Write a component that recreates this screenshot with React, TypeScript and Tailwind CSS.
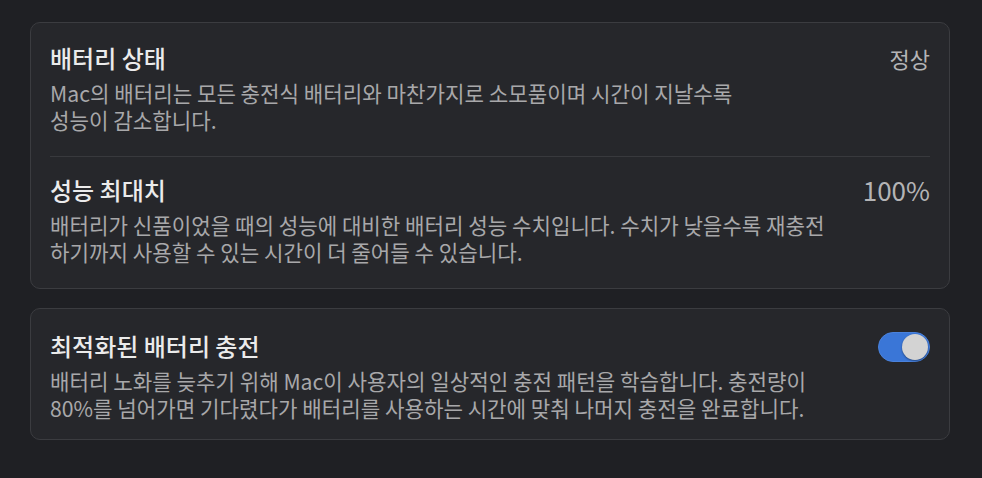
import React from "react";

const font = { fontFamily: '"Noto Sans CJK KR", "Noto Sans", sans-serif' };

function Row({ title, desc, right }: { title: string; desc: React.ReactNode; right?: React.ReactNode }) {
  return (
    <div className="flex items-start justify-between">
      <div className="flex flex-col">
        <div className="text-[24px] leading-[30px] font-medium text-[#ebebeb]">{title}</div>
        <div className="mt-[6px] text-[21.2px] leading-[27px] text-[#a8a8aa]">{desc}</div>
      </div>
      {right}
    </div>
  );
}

export default function App() {
  return (
    <div className="w-[982px] h-[478px] bg-[#1f2024] overflow-hidden pt-[22px] pl-[30px]" style={font}>
      <div className="w-[920px] rounded-[10px] border border-[#3b3c40] bg-[#26272b] px-[19px] pt-[20px] pb-[23px]">
        <Row
          title="배터리 상태"
          desc={<>Mac의 배터리는 모든 충전식 배터리와 마찬가지로 소모품이며 시간이 지날수록<br />성능이 감소합니다.</>}
          right={<div className="text-[22px] leading-[30px] text-[#b4b4b6]">정상</div>}
        />
        <div className="h-px bg-[#38393d] mt-[23px] mb-[18px]" />
        <Row
          title="성능 최대치"
          desc={<>배터리가 신품이었을 때의 성능에 대비한 배터리 성능 수치입니다. 수치가 낮을수록 재충전<br />하기까지 사용할 수 있는 시간이 더 줄어들 수 있습니다.</>}
          right={<div className="text-[26px] leading-[30px] text-[#b4b4b6]">100%</div>}
        />
      </div>
      <div className="mt-[19px] w-[920px] rounded-[10px] border border-[#3b3c40] bg-[#26272b] px-[19px] pt-[22px] pb-[18px]">
        <Row
          title="최적화된 배터리 충전"
          desc={<>배터리 노화를 늦추기 위해 Mac이 사용자의 일상적인 충전 패턴을 학습합니다. 충전량이<br />80%를 넘어가면 기다렸다가 배터리를 사용하는 시간에 맞춰 나머지 충전을 완료합니다.</>}
          right={
            <div className="mt-[1px] w-[52px] h-[30px] rounded-full bg-[#3a76d7] border border-[#4a82dc] flex items-center justify-end pr-[1px]">
              <div className="w-[26px] h-[26px] rounded-full bg-[#d3d3d3] shadow-[0_1px_2px_rgba(0,0,0,0.4)]" />
            </div>
          }
        />
      </div>
    </div>
  );
}
